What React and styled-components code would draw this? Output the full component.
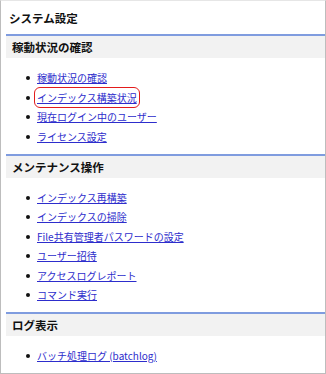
import React from "react";
import styled, { createGlobalStyle } from "styled-components";

const GlobalStyle = createGlobalStyle`
  html, body {
    margin: 0;
    padding: 0;
    background: #ffffff;
  }
  body {
    font-family: "Noto Sans CJK JP", "Noto Sans", sans-serif;
  }
`;

const sections = [
  {
    title: "稼動状況の確認",
    links: [
      { label: "稼動状況の確認" },
      { label: "インデックス構築状況", marked: true },
      { label: "現在ログイン中のユーザー" },
      { label: "ライセンス設定" },
    ],
  },
  {
    title: "メンテナンス操作",
    links: [
      { label: "インデックス再構築" },
      { label: "インデックスの掃除" },
      { label: "File共有管理者パスワードの設定" },
      { label: "ユーザー招待" },
      { label: "アクセスログレポート" },
      { label: "コマンド実行" },
    ],
  },
  {
    title: "ログ表示",
    links: [{ label: "バッチ処理ログ (batchlog)" }],
  },
];

const App = () => {
  return (
    <>
      <GlobalStyle />
      <Frame>
        <PageTitle>システム設定</PageTitle>
        {sections.map((section) => (
          <Section key={section.title}>
            <SectionHeader>{section.title}</SectionHeader>
            <LinkList>
              {section.links.map((link) => (
                <LinkItem key={link.label}>
                  <MenuLink href="#" $marked={link.marked}>
                    {link.label}
                  </MenuLink>
                </LinkItem>
              ))}
            </LinkList>
          </Section>
        ))}
      </Frame>
    </>
  );
};

export default App;

const Frame = styled.div`
  box-sizing: border-box;
  width: 326px;
  height: 374px;
  border: 1px solid #bdbdbd;
  border-top-color: #e6e6e6;
  padding-left: 5px;
  overflow: hidden;
`;

const PageTitle = styled.div`
  height: 33px;
  display: flex;
  align-items: center;
  padding-left: 3px;
  font-size: 11.5px;
  font-weight: bold;
  color: #111;
`;

// 섹션 구분선 + 헤더 + 링크 목록
const Section = styled.div`
  border-top: 2px solid #7f9cdf;
  padding-bottom: 7.5px;
`;

const SectionHeader = styled.div`
  height: 22px;
  display: flex;
  align-items: center;
  padding-left: 6px;
  background: #f2f2f2;
  font-size: 11.5px;
  font-weight: bold;
  color: #111;
`;

const LinkList = styled.ul`
  margin: 0;
  padding: 10px 0 0 31px;
  list-style: none;
`;

const LinkItem = styled.li`
  position: relative;
  height: 19.5px;
  line-height: 19.5px;
  font-size: 10px;

  &::before {
    content: "";
    position: absolute;
    left: -11px;
    top: 8px;
    width: 4px;
    height: 4px;
    border-radius: 50%;
    background: #111;
  }
`;

const MenuLink = styled.a`
  color: #2d2dcc;
  text-decoration: underline;
  border-radius: 3px;
  outline: ${(p) => (p.$marked ? "1.5px solid #e31b1b" : "none")};
  outline-offset: 2px;
`;
